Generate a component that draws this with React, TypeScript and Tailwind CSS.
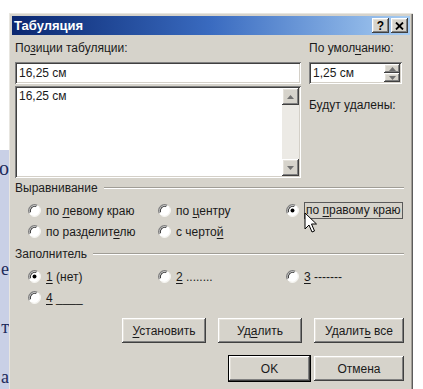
import React from "react";

const raised =
  "shadow-[inset_-1px_-1px_#404040,inset_1px_1px_#ffffff,inset_-2px_-2px_#808080,inset_2px_2px_#e4e1da]";
const sunken =
  "shadow-[inset_1px_1px_#808080,inset_-1px_-1px_#ffffff,inset_2px_2px_#404040,inset_-2px_-2px_#d4d0c8]";

const U: React.FC<{ children: React.ReactNode }> = ({ children }) => (
  <span className="underline underline-offset-2">{children}</span>
);

const Radio: React.FC<{ checked?: boolean }> = ({ checked }) => (
  <svg width="13" height="13" viewBox="0 0 12 12" className="shrink-0">
    <circle cx="6" cy="6" r="5.5" fill="#ffffff" />
    <path d="M1.2 8.5 A5.5 5.5 0 0 1 8.5 1.2" stroke="#808080" strokeWidth="1.2" fill="none" />
    <path d="M2.3 7.6 A4.3 4.3 0 0 1 7.6 2.3" stroke="#404040" strokeWidth="1" fill="none" />
    <path d="M10.8 3.5 A5.5 5.5 0 0 1 3.5 10.8" stroke="#f4f3ef" strokeWidth="1.2" fill="none" />
    {checked && <circle cx="6" cy="6" r="1.8" fill="#000000" />}
  </svg>
);

const Opt: React.FC<{ checked?: boolean; focus?: boolean; children: React.ReactNode }> = ({
  checked,
  focus,
  children,
}) => (
  <div className="flex items-center gap-[5px] h-[21px]">
    <Radio checked={checked} />
    <span className={focus ? "border border-[#5a5a5a] px-[1px] leading-[15px]" : ""}>{children}</span>
  </div>
);

const Group: React.FC<{ title: string }> = ({ title }) => (
  <div className="flex items-center gap-[6px] h-[18px] text-[#202020]">
    <span>{title}</span>
    <div className="flex-1 h-[2px] border-t border-[#a09d96] border-b-white" style={{ borderBottomWidth: 1 }} />
  </div>
);

const Btn: React.FC<{ w: string; def?: boolean; children: React.ReactNode }> = ({ w, def, children }) => (
  <div
    className={`${w} h-[25px] flex items-center justify-center bg-[#d6d3cb] ${raised} ${
      def ? "outline outline-1 outline-black" : ""
    }`}
  >
    <span>{children}</span>
  </div>
);

const Arrow: React.FC<{ up?: boolean }> = ({ up }) => (
  <svg width="7" height="4" viewBox="0 0 7 4">
    <path d={up ? "M0 4 L3.5 0 L7 4 Z" : "M0 0 L3.5 4 L7 0 Z"} fill="#707070" />
  </svg>
);

export default function App() {
  return (
    <div
      className="w-[423px] h-[389px] bg-white flex overflow-hidden text-[12px] text-[#1a1a1a]"
      style={{ fontFamily: '"Liberation Sans", Arial, sans-serif' }}
    >
      {/* document behind the dialog */}
      <div className="w-[9px] shrink-0 flex flex-col">
        <div className="h-[150px] shrink-0" />
        <div
          className="flex-1 bg-[#c9d0e6] flex flex-col items-end leading-none text-[#1c2a5a]"
          style={{ fontFamily: '"Liberation Serif", serif' }}
        >
          <span className="mt-[8px] text-[20px] shrink-0">о</span>
          <span className="mt-[82px] text-[18px] shrink-0">е</span>
          <span className="mt-[40px] text-[18px] shrink-0">т</span>
          <span className="mt-[32px] text-[18px] shrink-0">а</span>
        </div>
      </div>

      {/* dialog */}
      <div className="mt-[13px] w-[404px] h-[390px] shrink-0 bg-[#d6d3cb] border-l border-t border-[#e8e6e0] shadow-[inset_-1px_0_#5c5c5c,inset_-2px_0_#a09d96] p-[2px] pr-[3px]">
        <div className="h-[19px] flex items-center justify-between bg-gradient-to-r from-[#0b2770] via-[#3a6bc0] to-[#a8cdf2] pl-[2px] pr-[2px]">
          <span className="text-white font-bold text-[13px]">Табуляция</span>
          <div className="flex gap-[2px]">
            <div className={`w-[17px] h-[15px] bg-[#d6d3cb] ${raised} flex items-center justify-center font-bold text-[12px] text-black`}>?</div>
            <div className={`w-[17px] h-[15px] bg-[#d6d3cb] ${raised} flex items-center justify-center`}>
              <svg width="9" height="8" viewBox="0 0 9 8">
                <path d="M1 0.5 L8 7.5 M8 0.5 L1 7.5" stroke="#000" strokeWidth="1.8" />
              </svg>
            </div>
          </div>
        </div>

        <div className="pl-[3px] pr-[6px] pt-[3px]">
          <div className="flex gap-[8px]">
            {/* left column */}
            <div className="w-[286px]">
              <div className="h-[20px] flex items-center">
                <span>
                  По<U>з</U>иции табуляции:
                </span>
              </div>
              <div className={`h-[22px] mt-[4px] bg-white ${sunken} flex items-center pl-[4px]`}>16,25 см</div>
              <div className={`h-[92px] mt-[2px] bg-white ${sunken} flex p-[2px]`}>
                <div className="flex-1 pl-[2px] leading-[16px]">16,25 см</div>
                <div className="w-[17px] flex flex-col justify-between bg-[#eceae5]">
                  <div className={`h-[17px] bg-[#d6d3cb] ${raised} flex items-center justify-center`}>
                    <Arrow up />
                  </div>
                  <div className={`h-[17px] bg-[#d6d3cb] ${raised} flex items-center justify-center`}>
                    <Arrow />
                  </div>
                </div>
              </div>
            </div>
            {/* right column */}
            <div className="w-[93px]">
              <div className="h-[20px] flex items-center">
                <span>
                  По умол<U>ч</U>анию:
                </span>
              </div>
              <div className={`h-[22px] mt-[4px] bg-white ${sunken} flex items-center pl-[4px] pr-[2px]`}>
                <span className="flex-1">1,25 см</span>
                <div className="w-[16px] flex flex-col">
                  <div className={`h-[9px] bg-[#d6d3cb] ${raised} flex items-center justify-center`}>
                    <Arrow up />
                  </div>
                  <div className={`h-[9px] bg-[#d6d3cb] ${raised} flex items-center justify-center`}>
                    <Arrow />
                  </div>
                </div>
              </div>
              <div className="mt-[12px]">Будут удалены:</div>
            </div>
          </div>

          <div className="mt-[1px]">
            <Group title="Выравнивание" />
            <div className="relative grid grid-cols-[130px_128px_1fr] pl-[13px] mt-[3px]">
              <Opt>
                по <U>л</U>евому краю
              </Opt>
              <Opt>
                по <U>ц</U>ентру
              </Opt>
              <Opt checked focus>
                по <U>п</U>равому краю
              </Opt>
              <Opt>
                по разделит<U>е</U>лю
              </Opt>
              <Opt>
                с черто<U>й</U>
              </Opt>
              <div />
              <svg width="14" height="22" viewBox="0 0 14 22" className="absolute left-[289px] top-[12px]">
                <path d="M1 1 L1 17 L5 13 L8 20 L10.5 19 L7.5 12 L12.5 12 Z" fill="#ffffff" stroke="#000" strokeWidth="1" strokeLinejoin="round" />
              </svg>
            </div>
          </div>

          <div className="mt-[3px]">
            <Group title="Заполнитель" />
            <div className="grid grid-cols-[130px_128px_1fr] pl-[13px] mt-[3px]">
              <Opt checked>
                <U>1</U> (нет)
              </Opt>
              <Opt>
                <U>2</U> ........
              </Opt>
              <Opt>
                <U>3</U> -------
              </Opt>
              <Opt>
                <U>4</U> ____
              </Opt>
            </div>
          </div>

          <div className="flex justify-end gap-[12px] mt-[10px]">
            <Btn w="w-[84px]">
              <U>У</U>становить
            </Btn>
            <Btn w="w-[84px]">
              Уд<U>а</U>лить
            </Btn>
            <Btn w="w-[90px]">
              Удалит<U>ь</U> все
            </Btn>
          </div>
          <div className="flex justify-end gap-[4px] mt-[13px]">
            <Btn w="w-[81px]" def>
              OK
            </Btn>
            <Btn w="w-[90px]">Отмена</Btn>
          </div>
        </div>
      </div>
    </div>
  );
}
